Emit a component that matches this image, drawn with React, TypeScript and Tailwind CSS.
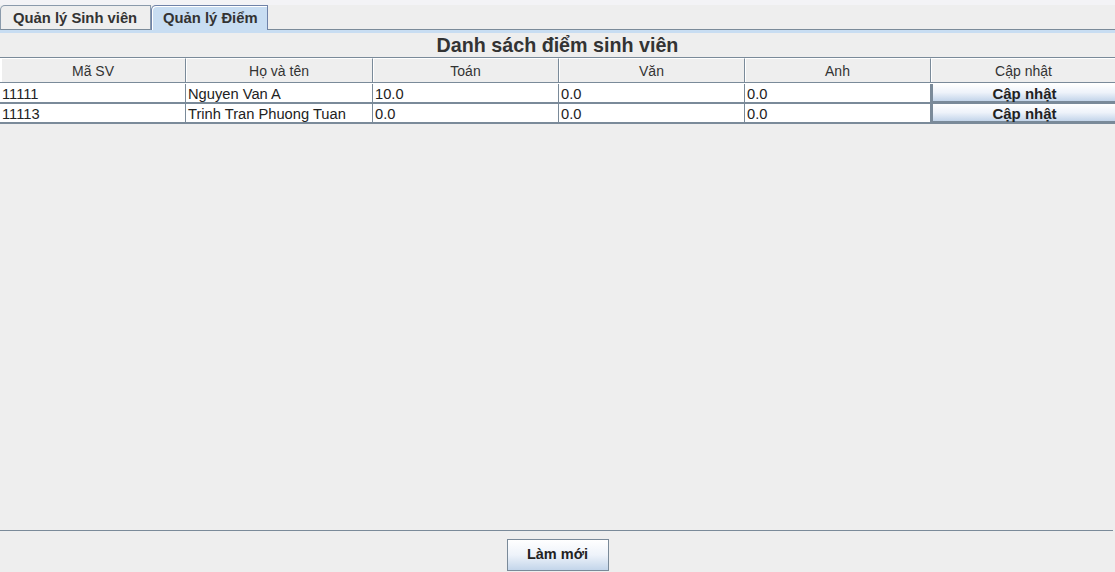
const rows = [
  { id: "11111", name: "Nguyen Van A", toan: "10.0", van: "0.0", anh: "0.0" },
  { id: "11113", name: "Trinh Tran Phuong Tuan", toan: "0.0", van: "0.0", anh: "0.0" },
];

const headers = ["Mã SV", "Họ và tên", "Toán", "Văn", "Anh", "Cập nhật"];

const App = () => {
  return (
    <div
      className="w-[1115px] h-[572px] bg-[#eeeeee] flex flex-col overflow-hidden text-[#222222]"
      style={{ fontFamily: '"Liberation Sans", Arial, sans-serif' }}
    >
      {/* top strip */}
      <div className="h-[5px] bg-[#f3f3f6]" />

      {/* tabs */}
      <div className="h-[25px] flex">
        <div className="w-[151px] h-[25px] border-t border-l border-r border-b border-[#8a9aab] border-b-[#7a8a99] rounded-tl-[5px] flex items-center pl-[12px] pt-[1px] text-[14.8px] font-bold text-[#333333] bg-[#eeeeee]">
          Quản lý Sinh viên
        </div>
        <div className="w-[117px] h-[25px] border-t border-l border-r border-[#6f82a8] rounded-tl-[5px] bg-[#c8ddf2] flex items-center pl-[11px] pt-[1px] text-[14.8px] font-bold text-[#333333] shadow-[inset_1px_1px_0_#ffffff]">
          Quản lý Điểm
        </div>
        <div className="flex-1 border-b border-[#7a8a99]" />
      </div>
      <div className="h-[3px] bg-[#c8ddf2]" />

      {/* title */}
      <div className="h-[24px] flex items-center justify-center pt-[2px] text-[19.7px] font-bold text-[#333333]">
        Danh sách điểm sinh viên
      </div>

      {/* table */}
      <div className="w-[1116px] border-t border-[#7a8a99]">
        <div className="grid grid-cols-[186px_187px_186px_186px_186px_185px] h-[25px] border-b border-[#7a8a99] bg-[#eeeeee]">
          {headers.map((h, i) => (
            <div
              key={h}
              className={
                "flex items-center justify-center pt-[1px] text-[14px] text-[#333333] border-t border-white " +
                (i === 0 ? "border-l " : "") +
                (i < 5 ? "border-r border-r-[#7a8a99] shadow-[inset_1px_0_0_#ffffff]" : "shadow-[inset_1px_0_0_#ffffff]")
              }
            >
              {h}
            </div>
          ))}
        </div>
        <div className="h-px bg-white" />
        {rows.map((r) => (
          <div
            key={r.id}
            className="grid grid-cols-[186px_187px_186px_186px_186px_185px] h-[20px] border-b-2 border-[#7a8a99]"
          >
            {[r.id, r.name, r.toan, r.van, r.anh].map((v, i) => (
              <div
                key={i}
                className="bg-white border-r border-[#7a8a99] flex items-center pl-[2px] pt-[2px] text-[14.7px] text-[#222222] leading-none"
              >
                {v}
              </div>
            ))}
            <div className="border-l-2 border-[#7a8a99] border-b border-b-[#7a8a99] bg-gradient-to-b from-[#ffffff] via-[#eef3fa] to-[#c3d5ea] flex items-center justify-center pt-[1px] text-[15px] font-bold text-[#222222] leading-none">
              Cập nhật
            </div>
          </div>
        ))}
      </div>

      <div className="flex-1" />

      {/* bottom */}
      <div className="h-px bg-[#7a8a99] mr-[2px]" />
      <div className="h-[41px] flex justify-center items-start pt-[8px]">
        <button className="w-[102px] h-[32px] border border-[#7a8a99] bg-gradient-to-b from-[#ffffff] via-[#eef3fa] to-[#c3d5ea] text-[14.5px] font-bold text-[#222222] flex items-center justify-center">
          Làm mới
        </button>
      </div>
    </div>
  );
};

export default App;
